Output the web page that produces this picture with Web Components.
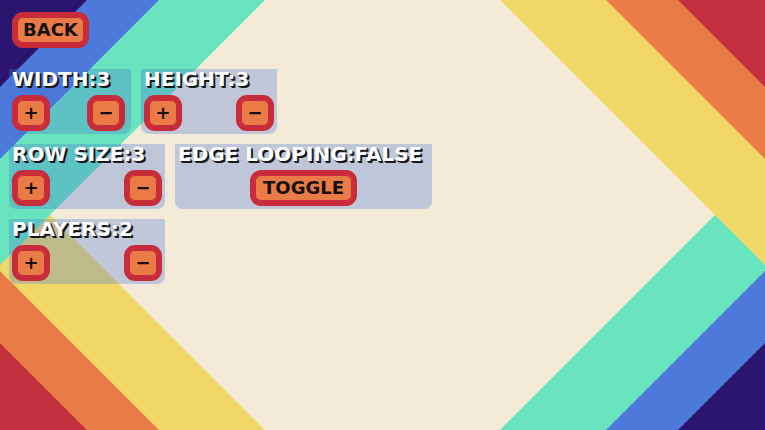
<!DOCTYPE html>
<html lang="en">
<head>
<meta charset="utf-8">
<meta name="viewport" content="width=device-width, initial-scale=1">
<title>Game settings</title>
<style>
  html, body { margin: 0; min-height: 100%; }
  body { background: #f3ead7; font-family: "DejaVu Sans", Verdana, sans-serif; font-weight: 700; }
</style>
</head>
<body>
<settings-screen>
  <pixel-button slot="nav">BACK</pixel-button>
  <setting-row>
    <number-setting name="WIDTH" value="3" style="--card-width:122px; --card-end:6px"></number-setting>
    <number-setting name="HEIGHT" value="3" style="--card-width:136px"></number-setting>
  </setting-row>
  <setting-row>
    <number-setting name="ROW SIZE" value="3" style="--card-width:156px"></number-setting>
    <toggle-setting name="EDGE LOOPING" style="--card-width:257px"></toggle-setting>
  </setting-row>
  <setting-row>
    <number-setting name="PLAYERS" value="2" style="--card-width:156px"></number-setting>
  </setting-row>
</settings-screen>

<script>
  class BaseElement extends HTMLElement {
    constructor() {
      super();
      this.attachShadow({ mode: 'open' }).innerHTML = this.constructor.markup;
    }
  }

  customElements.define('stripe-backdrop', class extends BaseElement {
    static markup = `
      <style>
        :host { display: block; position: absolute; inset: 0; z-index: -1; }
        svg { display: block; width: 100%; height: 100%; }
      </style>
      <svg viewBox="0 0 765 430" preserveAspectRatio="none" aria-hidden="true">
        <path fill="#f3ead7" d="M0 0H765V430H0z"/>
        <path fill="#f2d868" d="M0 165L265 430H0z"/>
        <path fill="#e97b47" d="M0 271L159 430H0z"/>
        <path fill="#c2303f" d="M0 343L87 430H0z"/>
        <path fill="#68e4be" d="M0 0H265L0 265z"/>
        <path fill="#4c79da" d="M0 0H159L0 159z"/>
        <path fill="#2b166f" d="M0 0H87L0 87z"/>
        <path fill="#68e4be" d="M765 165V430H500z"/>
        <path fill="#4c79da" d="M765 271V430H606z"/>
        <path fill="#2b166f" d="M765 343V430H678z"/>
        <path fill="#f2d868" d="M500 0H765V265z"/>
        <path fill="#e97b47" d="M606 0H765V159z"/>
        <path fill="#c2303f" d="M678 0H765V87z"/>
      </svg>`;
  });

  customElements.define('settings-screen', class extends BaseElement {
    static markup = `
      <style>
        :host { display: block; position: relative; z-index: 0; box-sizing: border-box;
                min-height: 100vh; padding: 12px 9px; }
        nav { padding: 0 3px 21px; }
        main { display: flex; flex-direction: column; gap: 10px; }
      </style>
      <stripe-backdrop></stripe-backdrop>
      <nav><slot name="nav"></slot></nav>
      <main><slot></slot></main>`;
  });

  customElements.define('setting-row', class extends BaseElement {
    static markup = `
      <style>:host { display: flex; flex-wrap: wrap; gap: 10px; }</style>
      <slot></slot>`;
  });

  customElements.define('pixel-button', class extends BaseElement {
    static markup = `
      <style>
        :host { display: flex; }
        button { box-sizing: border-box; height: 36px; min-width: 38px; margin: 0; padding: 0 6px;
                 border: 5px solid #c82b3a; border-radius: 11px; background: #ea7b46;
                 box-shadow: inset 0 0 0 1px #c82b3a;
                 color: #17100c; font: inherit; font-size: 18px; line-height: 24px; cursor: pointer; }
        :host([square]) button { padding: 0; }
        :host([wide]) button { padding: 0 8px; }
      </style>
      <button type="button"><slot></slot></button>`;
  });

  customElements.define('setting-card', class extends BaseElement {
    static markup = `
      <style>
        :host { display: block; box-sizing: border-box; min-width: var(--card-width);
                padding: 0 3px 3px; border-radius: 0 0 8px 8px; background: rgba(74, 116, 216, .3); }
        .title { height: 26px; font-size: 20px; line-height: 20px; white-space: nowrap;
                 color: #fff; text-shadow: 1px 1px #17181c, 2px 2px #17181c; }
        .controls { display: flex; justify-content: var(--align, space-between);
                    padding-right: calc(var(--card-end, 3px) - 3px); }
      </style>
      <div class="title"><slot name="title"></slot></div>
      <div class="controls"><slot></slot></div>`;
  });

  customElements.define('number-setting', class extends BaseElement {
    static markup = `
      <style>:host { display: block; }</style>
      <setting-card>
        <span slot="title" aria-live="polite"></span>
        <pixel-button square class="more">+</pixel-button>
        <pixel-button square class="less">−</pixel-button>
      </setting-card>`;
    connectedCallback() {
      const name = this.getAttribute('name');
      const find = (s) => this.shadowRoot.querySelector(s);
      let value = Number(this.getAttribute('value'));
      const show = () => { find('span').textContent = name + ':' + value; };
      find('.more').addEventListener('click', () => { value += 1; show(); });
      find('.less').addEventListener('click', () => { value = Math.max(1, value - 1); show(); });
      show();
    }
  });

  customElements.define('toggle-setting', class extends BaseElement {
    static markup = `
      <style>:host { display: block; } setting-card { --align: center; }</style>
      <setting-card>
        <span slot="title" aria-live="polite"></span>
        <pixel-button wide>TOGGLE</pixel-button>
      </setting-card>`;
    connectedCallback() {
      const label = this.shadowRoot.querySelector('span');
      let on = false;
      const show = () => { label.textContent = this.getAttribute('name') + ':' + (on ? 'TRUE' : 'FALSE'); };
      this.shadowRoot.querySelector('pixel-button').addEventListener('click', () => { on = !on; show(); });
      show();
    }
  });
</script>
</body>
</html>
